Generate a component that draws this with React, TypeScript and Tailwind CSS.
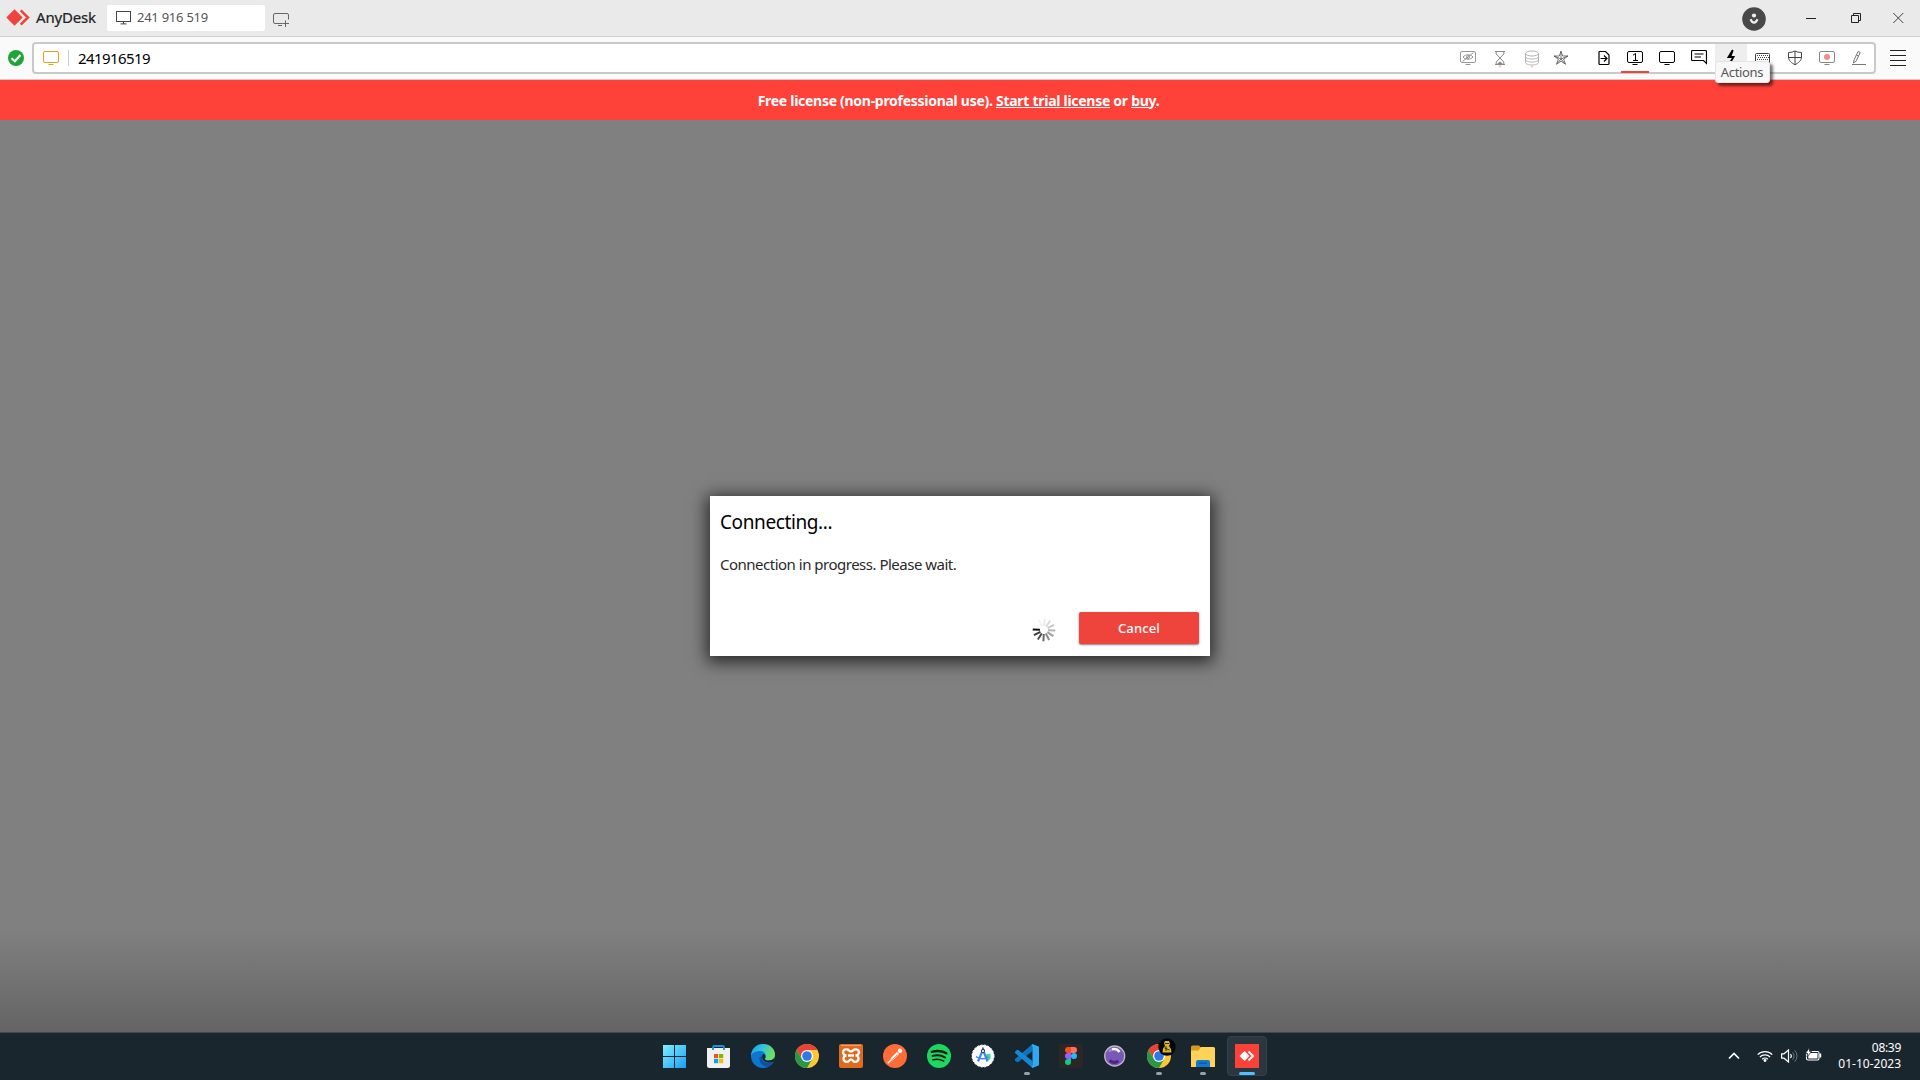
import React from "react";

type SvgProps = { w: number; h: number; className?: string; box?: string; children: React.ReactNode };

function Svg({ w, h, className = "", box, children }: SvgProps) {
  return (
    <svg
      width={w}
      height={h}
      viewBox={box ?? `0 0 ${w} ${h}`}
      fill="none"
      stroke="currentColor"
      strokeWidth="1"
      className={`block shrink-0 ${className}`}
    >
      {children}
    </svg>
  );
}

function Monitor({ children, className = "" }: { children?: React.ReactNode; className?: string }) {
  return (
    <Svg w={16} h={16} className={className}>
      <rect x="0.5" y="1.5" width="15" height="11" rx="1.5" />
      <path d="M5.5 14.5h5" />
      {children}
    </Svg>
  );
}

function Cell({ children, className = "" }: { children?: React.ReactNode; className?: string }) {
  return <div className={`relative flex h-7 w-8 items-center justify-center ${className}`}>{children}</div>;
}

function TitleBar() {
  return (
    <header className="flex h-[37px] shrink-0 items-start border-b border-[#d0d0d0] bg-[#eaeaea]">
      <Svg w={24} h={18} className="ml-1.5 mt-[9px]">
        <path d="M8.5 0.3 16.7 8.5 8.5 16.7 0.3 8.5Z" fill="#ef443b" stroke="none" />
        <path d="M14.7 1.3 21.9 8.5 14.7 15.7" stroke="#ef443b" strokeWidth="2.6" />
      </Svg>
      <span className="ml-1.5 mt-[5px] w-[71px] whitespace-nowrap text-[15px] leading-[25px] tracking-[-0.2px] text-[#222] [-webkit-text-stroke:0.2px_#222]">
        AnyDesk
      </span>
      <div className="mt-[5px] flex h-[26px] w-[158px] items-center rounded-[2px] bg-white">
        <Svg w={16} h={14} className="ml-[9px] text-[#444]">
          <rect x="0.5" y="0.5" width="14" height="10" />
          <path d="M7.5 10.5v2.5M4.5 12.9h6" />
        </Svg>
        <span className="ml-[5px] whitespace-nowrap pb-0.5 text-[13px] leading-[24px] tracking-[-0.25px] text-[#555]">241 916 519</span>
      </div>
      <Svg w={18} h={16} className="ml-2 mt-[13px] text-[#666]">
        <path d="M9.5 10.5H2A1.500 1.500 0 0 1 .5 9V2A1.500 1.500 0 0 1 2 .5H14A1.500 1.500 0 0 1 15.500 2V6.500M5 12.500h4M12.500 7.500v6.500M9.500 10.500h6.500" />
      </Svg>
      <div className="ml-auto flex h-[37px] items-start">
        <Svg w={24} h={24} className="mr-[40px] mt-[7px]">
          <circle cx="12" cy="12" r="11.8" fill="#484848" stroke="none" />
          <circle cx="12" cy="8.500" r="2.100" fill="#eee" stroke="none" />
          <path d="M8.500 12.300Q10 15.500 12 15.700 14 15.500 15.500 12.300" stroke="#eee" strokeWidth="2.200" />
        </Svg>
        <Svg w={10} h={12} className="mr-[35px] mt-[12px] text-[#222]">
          <path d="M0 6.500h10" />
        </Svg>
        <Svg w={11} h={11} className="mr-[31px] mt-[13px] text-[#222]">
          <path d="M.5 2.500h7v7h-7zM2.500 2.500v-2h7v7h-2" />
        </Svg>
        <Svg w={11} h={11} className="mr-[16px] mt-[13px] text-[#444]">
          <path d="M.3 0 10.300 10M10.300 0 .3 10" />
        </Svg>
      </div>
    </header>
  );
}

function ToolIcons() {
  return (
    <div className="-mr-px ml-auto flex h-7">
      <Cell className="text-[#999]">
        <Monitor>
          <path d="M3 7c2.500-3 7.500-3 10 0-2.500 3-7.500 3-10 0ZM13.500 2.500 2.500 11.500" />
          <circle cx="8" cy="7" r="1.500" />
        </Monitor>
      </Cell>
      <Cell className="text-[#888]">
        <Svg w={12} h={18} className="mt-0.5">
          <path d="M1 1.500h10M1 14.500h10M2.200 1.500V4L6 8 9.800 4V1.500M2.200 14.500V12L6 8l3.800 4v2.500" />
          <path d="M3 14l3-2.500L9 14z" fill="currentColor" stroke="none" />
          <circle cx="6" cy="16.300" r="1.300" fill="#fcc9c6" stroke="none" />
        </Svg>
      </Cell>
      <Cell className="text-[#b3b3b3]">
        <Svg w={16} h={18} className="mt-0.5">
          <ellipse cx="8" cy="3.500" rx="6.500" ry="2.500" />
          <path d="M1.500 3.500v9c0 1.500 3 2.500 6.500 2.500s6.500-1 6.500-2.500v-9M1.500 6.500C1.500 8 4.500 9 8 9s6.500-1 6.500-2.500M1.500 9.500C1.500 11 4.500 12 8 12s6.500-1 6.500-2.500" />
          <circle cx="8" cy="16.500" r="1.200" fill="#fcc9c6" stroke="none" />
        </Svg>
      </Cell>
      <Cell className="-ml-[3px] mr-[10px] text-[#555]">
        <Svg w={16} h={16}>
          <path d="M8 1.200 9.700 6H15L10.700 9l1.700 5.200L8 11.200l-4.400 3L5.300 9 1 6h5.300ZM8 1.200V9M15 6 8 9M12.400 14.200 8 9M3.600 14.200 8 9M1 6l7 3" strokeWidth=".8" />
        </Svg>
      </Cell>
      <Cell className="text-black">
        <Svg w={12} h={16} className="ml-px">
          <path d="M2 1.500H7.500L11 5v8.500a1 1 0 0 1-1 1H2a1 1 0 0 1-1-1V2.500a1 1 0 0 1 1-1ZM2.500 8.500H8.500M6 5.500l3 3-3 3" strokeWidth="1.200" />
        </Svg>
      </Cell>
      <Cell className="text-black">
        <Monitor>
          <path d="M6 5.200 8.500 3.500v7M6 10.500h5" />
        </Monitor>
        <span className="absolute bottom-[-1px] left-0.5 h-0.5 w-7 bg-[#ef443b]" />
      </Cell>
      <Cell className="text-black">
        <Monitor />
      </Cell>
      <Cell className="text-black">
        <Svg w={16} h={16} className="-mt-0.5">
          <path d="M1.500 1.500h13a1 1 0 0 1 1 1v12L12.500 11.500h-11a1 1 0 0 1-1-1v-8a1 1 0 0 1 1-1ZM3.500 5h9M3.500 8h6.500" strokeWidth="1.200" />
        </Svg>
      </Cell>
      <Cell className="bg-[#eee] text-black">
        <Svg w={8} h={16} className="-mt-0.5">
          <path d="M5.800 1 1.500 8h5L3.200 13.500M5.800 1 3.500 7.500" strokeWidth="1.800" />
        </Svg>
        <div className="absolute left-0 top-[17px] z-10 flex h-[22px] w-[55px] items-center justify-center rounded-[3px] border border-[#e4e4e4] bg-[#f8f8f8] pr-px pt-px text-[13px] leading-none tracking-[-0.35px] text-[#575757] shadow-[3px_3px_3px_rgba(0,0,0,0.55)]">
          Actions
        </div>
      </Cell>
      <Cell className="text-[#555]">
        <Svg w={16} h={16} className="text-[#444]">
          <rect x=".5" y="3.500" width="14" height="10" rx="1" />
          <path d="M2 5.500h11M3 7.500h11M2 9.500h11" strokeDasharray="1 1" />
          <path d="M4 11.500h7" />
        </Svg>
      </Cell>
      <Cell className="text-[#444]">
        <Svg w={16} h={16}>
          <path d="M1.500 2.500Q5.500 2.500 8 1q2.500 1.500 6.500 1.500V7c0 3.500-3 6-6.500 7.700C4.500 13 1.500 10.500 1.500 7ZM8 1v13.500M1.500 7.500h13" />
        </Svg>
      </Cell>
      <Cell className="text-[#888]">
        <Monitor>
          <circle cx="8" cy="7" r="3" fill="#f28b86" stroke="none" />
        </Monitor>
      </Cell>
      <Cell className="text-[#777]">
        <Svg w={16} h={16}>
          <path d="M1 14.500h14M2.500 13 3 10 7 1.500 9.200 2.500 5.200 11ZM5.500 5l2 1" />
        </Svg>
      </Cell>
    </div>
  );
}

function AddressRow() {
  return (
    <div className="flex h-[43px] shrink-0 items-start border-b border-[#ccc] bg-[#fafafa]">
      <Svg w={16} h={16} className="ml-2 mt-[13px]">
        <circle cx="8" cy="8" r="8" fill="#1fa535" stroke="none" />
        <path d="M3.500 8.300 6.800 11.300 12.500 5" stroke="#fff" strokeWidth="2.200" />
      </Svg>
      <div className="ml-2 mt-[5px] flex h-8 w-[1844px] items-center rounded-[4px] border-2 border-[#c9c9c9] bg-white">
        <Monitor className="ml-[9px] text-[#e5a21d]" />
        <span className="ml-[9px] h-4 w-px bg-[#ccc]" />
        <span className="ml-[9px] text-[15px] leading-[26px] tracking-[-0.58px] text-black">241916519</span>
        <ToolIcons />
      </div>
      <Svg w={16} h={18} className="ml-[14px] mt-[12px] text-[#222]">
        <path d="M0 1.500h16M0 6.500h16M0 11.500h16M0 16.500h16" />
      </Svg>
    </div>
  );
}

function Spinner() {
  const shades = ["#111", "#3a3a3a", "#505050", "#6a6a6a", "#8c8c8c", "#a2a2a2", "#b5b5b5", "#c8c8c8", "#dadada", "#ebebeb", "#f3f3f3", "#fafafa"];
  return (
    <Svg w={24} h={24}>
      {shades.map((c, i) => (
        <path key={c} d="M.7 12H8" stroke={c} strokeWidth="2" transform={`rotate(${-i * 30 + 3} 12 12)`} />
      ))}
    </Svg>
  );
}

function Dialog() {
  return (
    <section className="mt-[376px] flex h-[160px] w-[500px] flex-col bg-white px-[10px] shadow-[0_3px_16px_3px_rgba(0,0,0,0.7)]">
      <h1 className="mt-[12px] whitespace-nowrap text-[19px] leading-[28px] tracking-[-0.4px] text-black">Connecting...</h1>
      <p className="mt-[16px] whitespace-nowrap text-[15px] leading-[24px] tracking-[-0.5px] text-[#2a2a2a]">
        Connection in progress. Please wait.
      </p>
      <div className="mt-[35px] flex items-start justify-end">
        <div className="mr-[23px] mt-[7px]">
          <Spinner />
        </div>
        <button className="mr-px mt-px h-8 w-[120px] rounded-[2px] bg-[#ef443b] pt-px text-[13px] font-medium leading-none tracking-[0.15px] text-white shadow-[0_1px_2px_rgba(0,0,0,0.5)]">
          Cancel
        </button>
      </div>
    </section>
  );
}

function Chrome() {
  return (
    <Svg w={24} h={24}>
      <g stroke="none">
        <circle cx="12" cy="12" r="12" fill="#fcc934" />
        <path d="M1.600 6A12 12 0 0 1 22.400 6L12 6 6.800 15Z" fill="#ea4335" />
        <path d="M1.600 6A12 12 0 0 0 12 24L17.200 15 6.800 15Z" fill="#279847" />
        <circle cx="12" cy="12" r="6" fill="#fff" />
        <circle cx="12" cy="12" r="4.800" fill="#2f78e8" />
      </g>
    </Svg>
  );
}

const taskIcons: { id: string; mark?: "idle" | "active"; art: React.ReactNode }[] = [
  {
    id: "start",
    art: (
      <Svg w={24} h={24}>
        <defs>
          <linearGradient id="win" x1="0" y1="0" x2="1" y2="1">
            <stop stopColor="#7ff0ff" />
            <stop offset="1" stopColor="#1a9df5" />
          </linearGradient>
        </defs>
        <path d="M0 1H11V12H0ZM12 1H23V12H12ZM0 13H11V24H0ZM12 13H23V24H12Z" fill="url(#win)" stroke="none" />
      </Svg>
    ),
  },
  {
    id: "store",
    art: (
      <Svg w={24} h={24}>
        <path d="M0 4H23V21.500a2.500 2.500 0 0 1-2.500 2.500H2.500a2.500 2.500 0 0 1-2.500-2.500Z" fill="#f0f0f0" stroke="none" />
        <path d="M6 6V3.500A1.500 1.500 0 0 1 7.500 2h8a1.500 1.500 0 0 1 1.500 1.500V6" stroke="#1597d8" strokeWidth="1.800" />
        <g stroke="none">
          <path d="M7 10h4.200v4.200H7z" fill="#f25022" />
          <path d="M12 10h4.200v4.200h-4.200z" fill="#7fba00" />
          <path d="M7 15h4.200v4.200H7z" fill="#00a4ef" />
          <path d="M12 15h4.200v4.200h-4.200z" fill="#ffb900" />
        </g>
      </Svg>
    ),
  },
  {
    id: "edge",
    art: (
      <Svg w={24} h={24}>
        <defs>
          <linearGradient id="edgeTop" x1="0" y1="0" x2="1" y2="0.3">
            <stop stopColor="#1b9de2" />
            <stop offset="0.5" stopColor="#35c1e0" />
            <stop offset="1" stopColor="#6fe05a" />
          </linearGradient>
        </defs>
        <g stroke="none">
          <circle cx="12" cy="12" r="12" fill="#0b78d0" />
          <path d="M0 11.500C.5 4.500 5.800 0 12 0c7 0 12 5 12 10.500 0 4-3 6-6.500 6-3 0-4-1-3.500-2 1.500-2.500.5-7.500-5-7.500C5 7 1.500 8.500 0 11.500Z" fill="url(#edgeTop)" />
          <path d="M8.500 13.500C7.500 19 12 23 17 22.800 20 21.500 22 19.500 22.800 17.800 17 21 10.500 18 11 12.500 9.800 12.500 8.800 12.800 8.500 13.500Z" fill="#134f9c" />
          <path d="M14 14.500c1.200-1.500.5-4-1.500-4.500-2 1-2 5 1 7.200 3.300 2 7 1.500 9.600.2L24 13.500c-1.500 2-3.800 3-6.500 3-3 0-4-1-3.500-2Z" fill="#17252e" />
        </g>
      </Svg>
    ),
  },
  { id: "chrome", art: <Chrome /> },
  {
    id: "xampp",
    art: (
      <Svg w={24} h={24}>
        <rect x="0" y="0" width="24" height="24" rx="2" fill="#e06a1e" stroke="none" />
        <path d="M2 1.500h20" stroke="#f1a070" />
        <path
          d="M8 5.500a3 3 0 1 0-.5 5.800M8 5.500c2 0 2 2 4 2s2-2 4-2a3 3 0 1 1 .5 5.800M7.500 11.300a3.200 3.200 0 1 0 .5 6.500c2 0 2-2.300 4-2.300s2 2.300 4 2.300a3.200 3.200 0 1 0 .5-6.500M9 11.500h6"
          stroke="#fff"
          strokeWidth="2.300"
        />
      </Svg>
    ),
  },
  {
    id: "postman",
    art: (
      <Svg w={24} h={24}>
        <circle cx="12" cy="12" r="12" fill="#ff6c37" stroke="none" />
        <path d="M4.800 19.200 8.500 15.500" stroke="#fff" strokeWidth="1.300" />
        <path d="M8.500 15.500 15 9" stroke="#fff" strokeWidth="3" />
        <circle cx="17" cy="6.700" r="2.200" fill="#fff" stroke="none" />
        <path d="M9.500 15.500 14.500 10.500" stroke="#ff6c37" strokeWidth=".7" />
      </Svg>
    ),
  },
  {
    id: "spotify",
    art: (
      <Svg w={24} h={24}>
        <circle cx="12" cy="12" r="12" fill="#1ed760" stroke="none" />
        <g stroke="#101c14" strokeLinecap="round">
          <path d="M4.800 7.800c5-1.300 10.500-.8 14.600 1.500" strokeWidth="2.400" />
          <path d="M5.500 12c4.300-1.200 9-.7 12.500 1.500" strokeWidth="2" />
          <path d="M6 15.800c3.700-1 7.500-.6 10.700 1.300" strokeWidth="1.600" />
        </g>
      </Svg>
    ),
  },
  {
    id: "android-studio",
    art: (
      <Svg w={24} h={24}>
        <circle cx="12" cy="12" r="11" fill="#fff" stroke="#fff" strokeDasharray="2 1.500" />
        <path d="M14 14.500a4 4 0 0 1 5.500-4.500v5l-3 1.500z" fill="#3ddc84" stroke="none" />
        <path d="M11.300 7.500 7 17.500M12.700 7.500 16.500 17.500" stroke="#4285f4" strokeWidth="2.200" />
        <path d="M5 12.500c3.500 3 9 3 12.500.5" stroke="#4285f4" strokeWidth="1.400" />
        <circle cx="12" cy="7" r="1.600" fill="#fff" stroke="#34444e" strokeWidth="1.100" />
        <path d="M12 3.500v2" stroke="#34444e" strokeWidth="1.500" />
      </Svg>
    ),
  },
  {
    id: "vscode",
    mark: "idle",
    art: (
      <Svg w={24} h={24}>
        <g stroke="none">
          <path d="M17.500 0 17.500 7 3 18.200 1.500 17.800 0 16.200 0 15Z" fill="#0f74c0" />
          <path d="M17.500 24 17.500 17 3 5.800 1.500 6.200 0 7.800 0 9Z" fill="#1787d3" />
          <path d="M17.500 0 24 2.800V21.200L17.500 24 16.500 22.500 17.500 21V3L16.500 1.500Z" fill="#2fa9f2" />
        </g>
      </Svg>
    ),
  },
  {
    id: "figma",
    art: (
      <Svg w={24} h={24}>
        <rect width="24" height="24" rx="2" fill="#2a2726" stroke="none" />
        <g stroke="none">
          <path d="M12 3H9a3 3 0 0 0 0 6h3Z" fill="#f24e1e" />
          <path d="M12 3h3a3 3 0 0 1 0 6h-3Z" fill="#ff7262" />
          <path d="M12 9H9a3 3 0 0 0 0 6h3Z" fill="#a259ff" />
          <circle cx="15" cy="12" r="3" fill="#1abcfe" />
          <path d="M12 15H9a3 3 0 1 0 3 3Z" fill="#0acf83" />
        </g>
      </Svg>
    ),
  },
  {
    id: "orb",
    art: (
      <Svg w={24} h={24}>
        <circle cx="11.700" cy="12" r="10" fill="#7a58b8" stroke="#bdb8c8" strokeWidth="1.300" />
        <path d="M6 7.500C7.500 5.500 9.500 5 12 5" stroke="#a78fd8" strokeWidth="2.200" />
        <path d="M9 5.300c3-.7 5.500 0 7.500 2.700" stroke="#fff" strokeWidth="2.400" />
        <path d="M6.500 16.500c3 2.200 6.500 2.200 9 .5" stroke="#4a2585" strokeWidth="3" />
      </Svg>
    ),
  },
  {
    id: "chrome-profile",
    mark: "idle",
    art: (
      <>
        <Chrome />
        <Svg w={18} h={18} className="absolute left-[18px] top-px">
          <circle cx="9" cy="9" r="8.700" fill="#050505" stroke="none" />
          <path d="M7 3h4l1 3-1 2 2 3 .5 3.500h-9L5 10.500 7 8 6 5Z" fill="#d9b62c" stroke="none" />
          <path d="M7 5.500h4M6.500 10l5 2M8 8v5" stroke="#3a2d05" />
        </Svg>
      </>
    ),
  },
  {
    id: "files",
    mark: "idle",
    art: (
      <Svg w={24} h={24}>
        <g stroke="none">
          <path d="M0 3a1.500 1.500 0 0 1 1.500-1.500H8L10.500 4 8 7H0Z" fill="#d79a1c" />
          <path d="M10 3H22.500A1.500 1.500 0 0 1 24 4.500V23H0V6.500H7.500Z" fill="#ffd35a" />
          <path d="M5 18a2 2 0 0 1 2-2H17a2 2 0 0 1 2 2v5H5Z" fill="#1279d0" />
          <path d="M8 18.500h8v1.500H8z" fill="#0a5ba8" />
        </g>
      </Svg>
    ),
  },
  {
    id: "anydesk",
    mark: "active",
    art: (
      <Svg w={24} h={24}>
        <rect width="24" height="24" fill="#fb4238" stroke="none" />
        <path d="M9.500 7 14.500 12 9.500 17 4.500 12Z" fill="#fff" stroke="none" />
        <path d="M13.500 7.500 18 12 13.500 16.500" stroke="#fff" strokeWidth="1.900" />
      </Svg>
    ),
  },
];

function Taskbar() {
  return (
    <footer className="flex h-12 shrink-0 border-t border-[#41484d] bg-[#1a262e]">
      <div className="ml-[655px] flex gap-1 pt-[3px]">
        {taskIcons.map(({ id, mark, art }) => (
          <div
            key={id}
            className={`relative flex h-10 w-10 items-center justify-center rounded-[4px] ${
              mark === "active" ? "border border-[#35404a] bg-[#2b363f]" : "border border-transparent"
            }`}
          >
            {art}
            {mark === "idle" && <span className="absolute bottom-0 left-4 h-[3px] w-1.5 rounded-full bg-[#9aa0a3]" />}
            {mark === "active" && <span className="absolute bottom-0 left-[11px] h-[3px] w-4 rounded-full bg-[#4cc2ff]" />}
          </div>
        ))}
      </div>
      <div className="ml-auto flex items-start text-white">
        <Svg w={12} h={8} className="mr-[17px] mt-[19px]">
          <path d="M1 6.500 6 1.500 11 6.500" strokeWidth="1.700" />
        </Svg>
        <Svg w={16} h={12} className="mr-[8px] mt-[17px]">
          <path d="M.7 4.700a10.300 10.300 0 0 1 14.600 0M2.900 7a7.200 7.200 0 0 1 10.200 0M5.200 9.200a4 4 0 0 1 5.600 0" strokeWidth="1.200" />
          <circle cx="8" cy="10.500" r="1.400" fill="currentColor" stroke="none" />
        </Svg>
        <Svg w={17} h={14} className="mr-[7px] mt-[16px]">
          <path d="M.6 4.800H3L7.500 1V13L3 9.200H.6Z" strokeWidth="1.200" />
          <path d="M9.500 5a3 3 0 0 1 0 4" strokeWidth="1.100" />
          <path d="M11.500 3.200a5.500 5.500 0 0 1 0 7.600M13.500 1.200a8 8 0 0 1 0 11.600" stroke="#66727a" />
        </Svg>
        <Svg w={17} h={14} className="mr-[16px] mt-[14px] overflow-visible">
          <rect x="1.500" y="4.500" width="12.500" height="8.500" rx="1.500" strokeWidth="1.100" />
          <rect x="3.300" y="6" width="9.200" height="5.500" fill="currentColor" stroke="none" />
          <path d="M14.500 6.500h1.700v4h-1.700z" fill="currentColor" stroke="none" />
          <path d="M4.500.5.5 6.500H2.500L2 10 6.500 4.500H4.500Z" fill="currentColor" stroke="#1a262e" strokeWidth=".8" />
        </Svg>
        <div className="mr-[19px] mt-[7px] w-[63px] whitespace-nowrap text-right text-[12px] leading-4">
          <div className="tracking-[-0.3px]">08:39</div>
          <div>01-10-2023</div>
        </div>
      </div>
    </footer>
  );
}

export default function App() {
  return (
    <div className="flex h-[1080px] w-[1920px] flex-col overflow-hidden bg-[#808080] font-['Noto_Sans','Open_Sans',sans-serif]">
      <TitleBar />
      <AddressRow />
      <div className="flex h-10 shrink-0 items-center justify-center bg-[#ff4239] pr-[3px] pt-px text-[14px] font-bold leading-5 text-white">
        <p className="whitespace-nowrap tracking-[-0.28px]">
          Free license (non-professional use). <a className="underline underline-offset-1">Start trial license</a> or{" "}
          <a className="underline underline-offset-1">buy</a>.
        </p>
      </div>
      <main className="flex flex-1 items-start justify-center bg-[linear-gradient(to_bottom,#808080_0,#808080_810px,#646464_912px)]">
        <Dialog />
      </main>
      <Taskbar />
    </div>
  );
}
